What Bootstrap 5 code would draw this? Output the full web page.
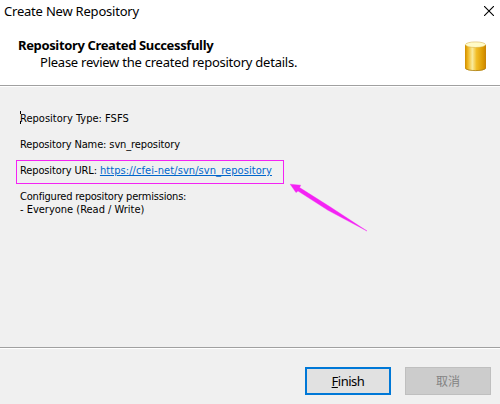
<!DOCTYPE html>
<html lang="en">
<head>
<meta charset="utf-8">
<title>Create New Repository</title>
<link href="https://cdn.jsdelivr.net/npm/bootstrap@5.3.0/dist/css/bootstrap.min.css" rel="stylesheet">
<style>
body{width:500px;height:404px;overflow:hidden;background:#f0f0f0;color:#000;font-family:"Noto Sans","Noto Sans CJK SC",sans-serif;font-size:13px;line-height:17px}
.wizard-head{height:87px;background:#fff;border-bottom:1px solid #fff;box-shadow:inset 0 -1px #a0a0a0}
.title-bar{height:24px;padding:3px 6px 0 4px}
.title-bar svg{margin-top:3px}
.banner{padding:13px 13px 0 18px}
.banner h1{font-size:13px;line-height:17px;letter-spacing:-.36px}
.banner-note{padding-left:22px;letter-spacing:-.24px}
.window-title{letter-spacing:-.21px}
.summary{height:260px;padding:25px 16px 0;font-family:"DejaVu Sans Condensed","DejaVu Sans",sans-serif;font-stretch:condensed;font-size:11px;line-height:13px}
.summary p{padding-left:4px}
.caret{left:4px;top:-1px;width:1px;height:13px;background:linear-gradient(#000 3px,transparent 3px,transparent 10px,#000 10px)}
.repo-type{letter-spacing:.02px}
.repo-name{margin-top:13px;letter-spacing:-.12px}
.url-box{width:268px;height:24px;margin:9px 0 6px;border:1px solid #f423f4;padding:3px 0 0 3px}
.url-label{letter-spacing:-.12px}
.url-box a{color:#0066cc;letter-spacing:.08px}
.perm-title{letter-spacing:-.2px}
.perm-item{letter-spacing:-.01px}
.pointer{left:286px;top:180px}
.actions{height:57px;border-top:1px solid #a0a0a0;box-shadow:inset 0 1px #fff;padding:19px 9px 0 0;gap:14px}
.actions .btn{width:86px;height:28px;padding:0;color:#000;background:#e1e1e1;border:2px solid #0078d7;font-size:13px;line-height:22px;letter-spacing:-.5px}
.actions .btn:disabled{background:#ccc;border:1px solid #bfbfbf;color:#838383;opacity:1;font-size:12px;line-height:25px;letter-spacing:0}
</style>
</head>
<body>
<header class="wizard-head">
  <div class="title-bar d-flex justify-content-between">
    <span class="window-title">Create New Repository</span>
    <svg width="10" height="10" viewBox="0 0 10 10" stroke="#000" stroke-width="1.1"><path d="M0 0L10 10M10 0L0 10"/></svg>
  </div>
  <div class="banner d-flex justify-content-between">
    <div>
      <h1 class="fw-bold mb-0">Repository Created Successfully</h1>
      <div class="banner-note">Please review the created repository details.</div>
    </div>
    <svg width="23" height="31" viewBox="0 0 23 31" class="mt-1">
      <defs><linearGradient id="gold"><stop offset="0" stop-color="#cf8c00"/><stop offset=".13" stop-color="#efb51c"/><stop offset=".35" stop-color="#f9eb9e"/><stop offset=".55" stop-color="#f1bd27"/><stop offset=".85" stop-color="#dc9a00"/><stop offset="1" stop-color="#c68105"/></linearGradient></defs>
      <path d="M1 4V27C1 31 22 31 22 27V4Z" fill="url(#gold)"/>
      <path d="M1.5 27.2C3 30.4 20 30.4 21.5 27.2" fill="none" stroke="#a9801e" stroke-width=".8"/>
      <ellipse cx="11.5" cy="3.7" rx="10.1" ry="2.8" fill="#fffbc8" stroke="#d5a936" stroke-width=".5"/>
    </svg>
  </div>
</header>
<main class="summary">
  <p class="repo-type mb-0 position-relative"><span class="caret position-absolute"></span>Repository Type: FSFS</p>
  <p class="repo-name mb-0">Repository Name: svn_repository</p>
  <div class="url-box d-flex"><span class="url-label">Repository URL:&nbsp;</span><a href="#">https://cfei-net/svn/svn_repository</a></div>
  <p class="perm-title mb-0">Configured repository permissions:</p>
  <p class="perm-item mb-0">- Everyone (Read / Write)</p>
</main>
<svg class="pointer position-absolute" width="84" height="54" viewBox="286 180 84 54"><path d="M290.2 184.2L300.7 185.2L299.6 187.6L330 206.8L367 231L328 210.3L298 191L296 192.6Z" fill="#f423f4" stroke="#f423f4" stroke-width=".4"/></svg>
<footer class="actions d-flex justify-content-end align-items-start">
  <button class="btn rounded-0"><u>F</u>inish</button>
  <button class="btn rounded-0" disabled>取消</button>
</footer>
<script src="https://cdn.jsdelivr.net/npm/bootstrap@5.3.0/dist/js/bootstrap.bundle.min.js"></script>
</body>
</html>
